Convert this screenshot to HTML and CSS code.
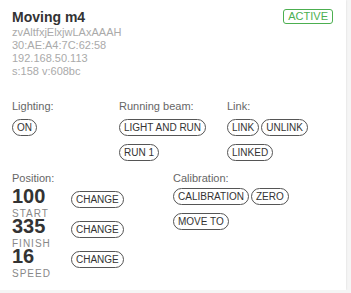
FILE: index.html
```html
<!DOCTYPE html>
<html lang="en">
<head>
    <meta charset="UTF-8">
    <meta name="viewport" content="width=device-width, initial-scale=1.0">
    <title>Moving m4</title>
    <link rel="stylesheet" href="styles.css">
</head>
<body>
    <div class="card">
        <div class="header">
            <div class="info">
                <h1>Moving m4</h1>
                <div class="meta">zvAltfxjElxjwLAxAAAH</div>
                <div class="meta">30:AE:A4:7C:62:58</div>
                <div class="meta">192.168.50.113</div>
                <div class="meta">s:158 v:608bc</div>
            </div>
            <span class="status">ACTIVE</span>
        </div>

        <!-- Controls -->
        <div class="controls">
            <div class="group">
                <div class="label">Lighting:</div>
                <div class="buttons">
                    <button>ON</button>
                </div>
            </div>
            <div class="group">
                <div class="label">Running beam:</div>
                <div class="buttons">
                    <button>LIGHT AND RUN</button>
                    <button>RUN 1</button>
                </div>
            </div>
            <div class="group">
                <div class="label">Link:</div>
                <div class="buttons">
                    <button>LINK</button>
                    <button>UNLINK</button>
                    <button>LINKED</button>
                </div>
            </div>
        </div>

        <div class="lower">
            <div class="group">
                <div class="label">Position:</div>
                <div class="value-row">
                    <div class="value"><b>100</b><span>START</span></div>
                    <button>CHANGE</button>
                </div>
                <div class="value-row">
                    <div class="value"><b>335</b><span>FINISH</span></div>
                    <button>CHANGE</button>
                </div>
                <div class="value-row">
                    <div class="value"><b>16</b><span>SPEED</span></div>
                    <button>CHANGE</button>
                </div>
            </div>
            <div class="group">
                <div class="label">Calibration:</div>
                <div class="buttons">
                    <button>CALIBRATION</button>
                    <button>ZERO</button>
                    <button>MOVE TO</button>
                </div>
            </div>
        </div>
    </div>
</body>
</html>
```

FILE: styles.css
```css
html, body {
    margin: 0;
    background: #f5f5f5;
    font-family: "Liberation Sans", Arial, sans-serif;
}

.card {
    width: 346px;
    height: 290px;
    background: white;
    box-shadow: 0 0 2px rgba(0,0,0,0.12);
    padding: 8px 12px;
    box-sizing: border-box;
}

.header {
    display: flex;
    justify-content: space-between;
    align-items: flex-start;
}

h1 {
    margin: 0;
    font-size: 14px;
    line-height: 18px;
    color: #333;
}

.meta {
    font-size: 11px;
    line-height: 13px;
    color: #aaa;
}

.status {
    margin-top: 1px;
    margin-right: 1px;
    border: 1px solid #4caf50;
    border-radius: 3px;
    color: #4caf50;
    font-size: 11px;
    line-height: 13px;
    padding: 0 4px;
}

.controls {
    display: grid;
    grid-template-columns: 107px 108px 1fr;
    margin-top: 22px;
}

.lower {
    display: grid;
    grid-template-columns: 161px 1fr;
    margin-top: 11px;
}

.label {
    font-size: 11px;
    line-height: 13px;
    color: #666;
    margin-bottom: 6px;
}

.lower .label {
    margin-bottom: 3px;
}

.buttons {
    display: flex;
    flex-wrap: wrap;
    gap: 8px 2px;
}

.lower .buttons {
    margin-top: 3px;
}

button {
    font-family: inherit;
    font-size: 10px;
    line-height: 13px;
    padding: 1px 4px;
    color: #333;
    background: white;
    border: 1px solid #555;
    border-radius: 10px;
    margin: 0;
    cursor: pointer;
}

.value-row {
    display: flex;
    align-items: flex-start;
    height: 30px;
}

.value {
    width: 59px;
    display: flex;
    flex-direction: column;
}

.value b {
    font-size: 20px;
    line-height: 16px;
    color: #333;
}

.value span {
    margin-top: 6px;
    font-size: 10px;
    line-height: 8px;
    letter-spacing: 1px;
    color: #888;
}

.value-row button {
    margin-top: 3px;
}
```
